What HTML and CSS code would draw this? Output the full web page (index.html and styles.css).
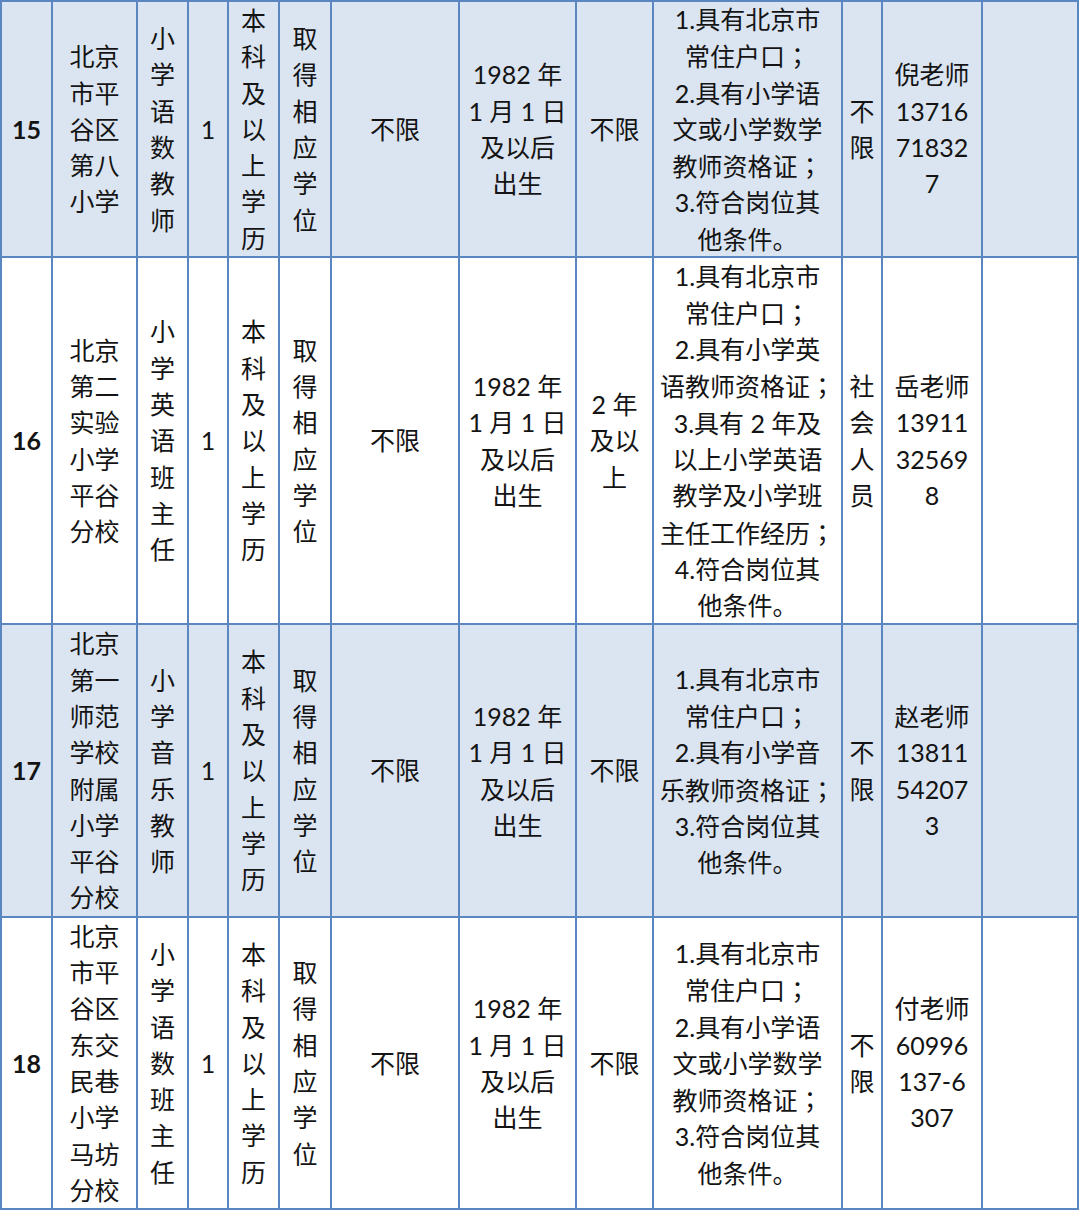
FILE: index.html
```html
<!DOCTYPE html>
<html lang="zh-CN">
<head>
<meta charset="utf-8">
<title>招聘岗位表</title>
<link rel="stylesheet" href="styles.css">
</head>
<body>
<div class="sheet">
  <!-- row 15 -->
  <div class="c shade num">15</div>
  <div class="c shade">北京<br>市平<br>谷区<br>第八<br>小学</div>
  <div class="c shade">小<br>学<br>语<br>数<br>教<br>师</div>
  <div class="c shade">1</div>
  <div class="c shade">本<br>科<br>及<br>以<br>上<br>学<br>历</div>
  <div class="c shade">取<br>得<br>相<br>应<br>学<br>位</div>
  <div class="c shade">不限</div>
  <div class="c shade">1982 年<br>1 月 1 日<br>及以后<br>出生</div>
  <div class="c shade">不限</div>
  <div class="c shade"><div class="t">1.具有北京市<br>常住户口<span class="semi" lang="zh-TW">；</span><br>2.具有小学语<br>文或小学数学<br>教师资格证<span class="semi" lang="zh-TW">；</span><br>3.符合岗位其<br>他条件。</div></div>
  <div class="c shade">不<br>限</div>
  <div class="c shade">倪老师<br>13716<br>71832<br>7</div>
  <div class="c shade"></div>

  <!-- row 16 -->
  <div class="c num">16</div>
  <div class="c">北京<br>第二<br>实验<br>小学<br>平谷<br>分校</div>
  <div class="c">小<br>学<br>英<br>语<br>班<br>主<br>任</div>
  <div class="c">1</div>
  <div class="c">本<br>科<br>及<br>以<br>上<br>学<br>历</div>
  <div class="c">取<br>得<br>相<br>应<br>学<br>位</div>
  <div class="c">不限</div>
  <div class="c">1982 年<br>1 月 1 日<br>及以后<br>出生</div>
  <div class="c">2 年<br>及以<br>上</div>
  <div class="c"><div class="t">1.具有北京市<br>常住户口<span class="semi" lang="zh-TW">；</span><br>2.具有小学英<br>语教师资格证<span class="semi" lang="zh-TW">；</span><br>3.具有 2 年及<br>以上小学英语<br>教学及小学班<br>主任工作经历<span class="semi" lang="zh-TW">；</span><br>4.符合岗位其<br>他条件。</div></div>
  <div class="c">社<br>会<br>人<br>员</div>
  <div class="c">岳老师<br>13911<br>32569<br>8</div>
  <div class="c"></div>

  <!-- row 17 -->
  <div class="c shade num">17</div>
  <div class="c shade">北京<br>第一<br>师范<br>学校<br>附属<br>小学<br>平谷<br>分校</div>
  <div class="c shade">小<br>学<br>音<br>乐<br>教<br>师</div>
  <div class="c shade">1</div>
  <div class="c shade">本<br>科<br>及<br>以<br>上<br>学<br>历</div>
  <div class="c shade">取<br>得<br>相<br>应<br>学<br>位</div>
  <div class="c shade">不限</div>
  <div class="c shade">1982 年<br>1 月 1 日<br>及以后<br>出生</div>
  <div class="c shade">不限</div>
  <div class="c shade"><div class="t">1.具有北京市<br>常住户口<span class="semi" lang="zh-TW">；</span><br>2.具有小学音<br>乐教师资格证<span class="semi" lang="zh-TW">；</span><br>3.符合岗位其<br>他条件。</div></div>
  <div class="c shade">不<br>限</div>
  <div class="c shade">赵老师<br>13811<br>54207<br>3</div>
  <div class="c shade"></div>

  <!-- row 18 -->
  <div class="c num">18</div>
  <div class="c">北京<br>市平<br>谷区<br>东交<br>民巷<br>小学<br>马坊<br>分校</div>
  <div class="c">小<br>学<br>语<br>数<br>班<br>主<br>任</div>
  <div class="c">1</div>
  <div class="c">本<br>科<br>及<br>以<br>上<br>学<br>历</div>
  <div class="c">取<br>得<br>相<br>应<br>学<br>位</div>
  <div class="c">不限</div>
  <div class="c">1982 年<br>1 月 1 日<br>及以后<br>出生</div>
  <div class="c">不限</div>
  <div class="c"><div class="t">1.具有北京市<br>常住户口<span class="semi" lang="zh-TW">；</span><br>2.具有小学语<br>文或小学数学<br>教师资格证<span class="semi" lang="zh-TW">；</span><br>3.符合岗位其<br>他条件。</div></div>
  <div class="c">不<br>限</div>
  <div class="c">付老师<br>60996<br>137-6<br>307</div>
  <div class="c"></div>
</div>
</body>
</html>
```

FILE: styles.css
```css
html, body {
  margin: 0;
  padding: 0;
  background: #ffffff;
}

.sheet {
  width: 1075px;
  display: grid;
  grid-template-columns: 49px 83px 49px 38px 49px 50px 126px 115px 75px 187px 38px 98px 94px;
  grid-template-rows: 254px 365px 291px 290px;
  gap: 2px;
  padding: 2px;
  background: #5a86c2;
  font-family: "Lato", "Noto Sans CJK SC", sans-serif;
  font-size: 25px;
  line-height: 36.3px;
  color: #141414;
}

.c {
  background: #ffffff;
  display: flex;
  align-items: center;
  justify-content: center;
  text-align: center;
  white-space: nowrap;
  overflow: visible;
}

.c.shade {
  background: #dbe5f1;
}

.t {
  text-align: center;
}

.num {
  font-weight: 700;
}

.semi {
  font-family: "Noto Sans CJK TC", "Noto Sans CJK SC", sans-serif;
}
```
